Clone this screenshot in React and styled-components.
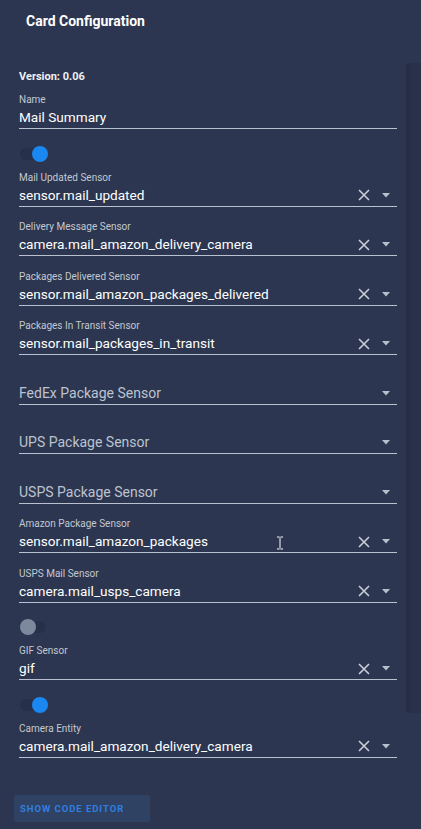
import React from "react";
import styled, { createGlobalStyle } from "styled-components";

// style
const GlobalStyle = createGlobalStyle`
  html, body {
    margin: 0;
    padding: 0;
    background: #2c3650;
  }
  body {
    font-family: Roboto, "Liberation Sans", sans-serif;
    -webkit-font-smoothing: antialiased;
  }
`;

const StyledPage = styled.div`
  display: flex;
  width: 421px;
  height: 829px;
  background: #2c3650;
  overflow: hidden;
`;

const Editor = styled.main`
  width: 378px;
  padding: 0 9px 0 19px;
  flex-shrink: 0;
`;

const Title = styled.h1`
  margin: 0;
  padding: 11px 0 0 7px;
  font-size: 14px;
  line-height: 20px;
  font-weight: 700;
  color: #ffffff;
`;

const Version = styled.div`
  margin-top: 39px;
  font-size: 11px;
  line-height: 14px;
  font-weight: 700;
  color: #eef1f6;
`;

const Field = styled.div`
  position: relative;
  height: 35px;
  margin-top: ${(p) => p.$top || 0}px;
  margin-bottom: 13.5px;
  border-bottom: 1px solid #b9c1d0;
`;

const Label = styled.div`
  height: 14px;
  font-size: 10px;
  line-height: 14px;
  color: #c3c8d1;
`;

const ValueRow = styled.div`
  display: flex;
  align-items: center;
  height: 21px;
`;

const Value = styled.div`
  flex: 1;
  font-size: ${(p) => (p.$placeholder ? 14 : 13.6)}px;
  line-height: 21px;
  color: ${(p) => (p.$placeholder ? "#bcc3cf" : "#ffffff")};
  white-space: nowrap;
`;

const IconBox = styled.div`
  display: flex;
  align-items: center;
  justify-content: center;
  width: ${(p) => p.$w}px;
  height: 21px;
`;

const SwitchRow = styled.div`
  display: flex;
  align-items: center;
  height: 22px;
  margin-bottom: 6px;
`;

const Track = styled.div`
  position: relative;
  width: 26px;
  height: 12px;
  border-radius: 6px;
  background: #26304a;
  margin-left: 1px;
`;

const Thumb = styled.div`
  position: absolute;
  top: -2px;
  left: ${(p) => (p.$on ? 12 : 0)}px;
  width: 16px;
  height: 16px;
  border-radius: 50%;
  background: ${(p) => (p.$on ? "#1b88f1" : "#7c889b")};
`;

const CodeButton = styled.button`
  display: block;
  margin: 37px 0 0 -5px;
  width: 136px;
  height: 27px;
  border: none;
  border-radius: 2px;
  background: #2f4264;
  color: #2f7fe0;
  font-family: Roboto, "Liberation Sans", sans-serif;
  font-size: 9.5px;
  font-weight: 700;
  letter-spacing: 0.95px;
  text-align: left;
  padding: 0 0 0 6px;
`;

const SidePanel = styled.aside`
  margin-top: 63px;
  width: 15px;
  height: 650px;
  background: #283149;
  border-left: 4px solid #252e45;
  border-radius: 3px 0 0 3px;
`;

const Cursor = styled.svg`
  position: absolute;
  left: 257px;
  top: 19px;
`;

// icons
const ClearIcon = () => (
  <svg width="12" height="12" viewBox="0 0 12 12">
    <path d="M1 1L11 11M11 1L1 11" stroke="#c9ced7" strokeWidth="1.6" />
  </svg>
);

const ArrowIcon = () => (
  <svg width="8" height="5" viewBox="0 0 8 5">
    <path d="M0 0H8L4 4.5Z" fill="#b7bfcd" />
  </svg>
);

const fields = [
  { label: "Mail Updated Sensor", value: "sensor.mail_updated" },
  { label: "Delivery Message Sensor", value: "camera.mail_amazon_delivery_camera" },
  { label: "Packages Delivered Sensor", value: "sensor.mail_amazon_packages_delivered" },
  { label: "Packages In Transit Sensor", value: "sensor.mail_packages_in_transit" },
  { placeholder: "FedEx Package Sensor" },
  { placeholder: "UPS Package Sensor" },
  { placeholder: "USPS Package Sensor" },
  { label: "Amazon Package Sensor", value: "sensor.mail_amazon_packages", cursor: true },
  { label: "USPS Mail Sensor", value: "camera.mail_usps_camera" },
];

const EntityField = ({ label, value, placeholder, cursor }) => (
  <Field>
    <Label>{label}</Label>
    <ValueRow>
      <Value $placeholder={!!placeholder}>{value || placeholder}</Value>
      {value && (
        <IconBox $w={22}>
          <ClearIcon />
        </IconBox>
      )}
      <IconBox $w={22}>
        <ArrowIcon />
      </IconBox>
    </ValueRow>
    {cursor && (
      <Cursor width="8" height="14" viewBox="0 0 8 14">
        <path
          d="M1 1H3.5M4.5 1H7M4 1.5V12.5M1 13H3.5M4.5 13H7"
          stroke="#ffffff"
          strokeWidth="1"
          fill="none"
        />
      </Cursor>
    )}
  </Field>
);

const Toggle = ({ on }) => (
  <SwitchRow>
    <Track>
      <Thumb $on={on} />
    </Track>
  </SwitchRow>
);

const App = () => {
  return (
    <StyledPage>
      <GlobalStyle />
      <Editor>
        <Title>Card Configuration</Title>
        <Version>Version: 0.06</Version>
        <Field $top={9}>
          <Label>Name</Label>
          <ValueRow>
            <Value>Mail Summary</Value>
          </ValueRow>
        </Field>
        <Toggle on />
        {fields.map((f) => (
          <EntityField key={f.label || f.placeholder} {...f} />
        ))}
        <Toggle />
        <EntityField label="GIF Sensor" value="gif" />
        <Toggle on />
        <EntityField label="Camera Entity" value="camera.mail_amazon_delivery_camera" />
        <CodeButton>SHOW CODE EDITOR</CodeButton>
      </Editor>
      <SidePanel />
    </StyledPage>
  );
};

export default App;
